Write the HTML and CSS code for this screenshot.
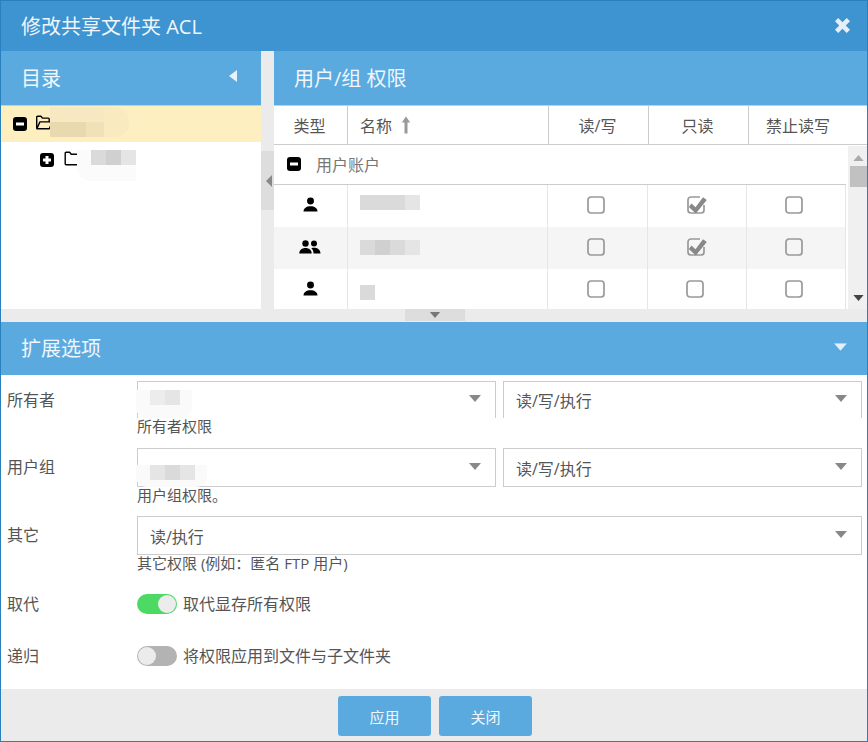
FILE: index.html
```html
<!DOCTYPE html>
<html lang="zh-CN">
<head>
    <meta charset="UTF-8">
    <meta name="viewport" content="width=device-width, initial-scale=1.0">
    <title>修改共享文件夹 ACL</title>
    <link rel="stylesheet" href="styles.css">
</head>
<body>
    <svg class="defs" aria-hidden="true">
        <symbol id="i-minus" viewBox="0 0 14 14"><rect width="14" height="14" rx="3" fill="#000"/><rect x="3" y="5.500" width="8" height="3" fill="#fff"/></symbol>
        <symbol id="i-plus" viewBox="0 0 14 14"><rect width="14" height="14" rx="3" fill="#000"/><path d="M5.500 3h3v2.500H11v3H8.500V11h-3V8.500H3v-3h2.500z" fill="#fff"/></symbol>
        <symbol id="i-folder-open" viewBox="0 0 17 15"><path d="M.7 13.500V2.200c0-.5.4-.9.9-.9h3.300l1.600 1.800h5.800c.5 0 .9.400.9.900v2.200M.9 13.700l3-6.800h12.400l-3 6.800z" fill="none" stroke="#000" stroke-width="1.400" stroke-linejoin="round"/></symbol>
        <symbol id="i-folder" viewBox="0 0 16 15"><path d="M.7 12.800V2.200c0-.5.4-.9.900-.9h3.500l1.600 1.900h7.800c.5 0 .9.400.9.900v8.700c0 .5-.4.900-.9.900H1.600c-.5 0-.9-.4-.9-.9z" fill="none" stroke="#000" stroke-width="1.400" stroke-linejoin="round"/></symbol>
        <symbol id="i-user" viewBox="0 0 16 16"><circle cx="8" cy="4.300" r="3.700"/><path d="M.5 15.500c0-3.600 3.200-5.700 7.500-5.700s7.500 2.100 7.500 5.700z"/></symbol>
        <symbol id="i-group" viewBox="0 0 22 14"><circle cx="6.500" cy="3.500" r="3.200"/><circle cx="15" cy="3.500" r="3"/><path d="M.3 13.500c0-3.400 2.600-5.500 6.200-5.500s6.200 2.100 6.200 5.500zM14.500 13.500c0-2.300-.8-4.200-2.200-5.200.8-.4 1.700-.5 2.700-.5 3.400 0 6.500 2 6.500 5.700z"/></symbol>
        <symbol id="i-box" viewBox="0 0 18 18"><rect x="1" y="1" width="16" height="16" rx="3" fill="none" stroke="#999" stroke-width="1.700"/></symbol>
        <symbol id="i-check" viewBox="0 0 21 18"><path d="M13 1H4a3 3 0 0 0-3 3v10a3 3 0 0 0 3 3h10a3 3 0 0 0 3-3V9" fill="none" stroke="#999" stroke-width="1.700"/><path d="M4.500 7.500l4 3.700 7.500-10 3.800 2.800-11 13.500-7-6.500z" fill="#888"/></symbol>
        <symbol id="i-caret" viewBox="0 0 12 7"><path d="M0 0h12L6 7z"/></symbol>
    </svg>

    <div class="dialog">
        <div class="title-bar">
            <span>修改共享文件夹 ACL</span>
            <svg class="close-icon" viewBox="0 0 14 14"><path d="M3 0l4 4 4-4 3 3-4 4 4 4-3 3-4-4-4 4-3-3 4-4-4-4z"/></svg>
        </div>

        <div class="panes">
            <div class="tree-pane">
                <div class="panel-head">
                    <span>目录</span>
                    <span class="arrow-left"></span>
                </div>
                <div class="tree-row selected">
                    <svg class="sq-icon"><use href="#i-minus"/></svg>
                    <svg class="folder-icon"><use href="#i-folder-open"/></svg>
                    <div class="smudge tree-smudge-1">
                        <i class="tan-1"></i><i class="tan-1"></i><i class="tan-1"></i>
                        <i class="tan-2 first"></i><i class="tan-2"></i><i class="tan-3"></i>
                    </div>
                </div>
                <div class="tree-row child">
                    <svg class="sq-icon"><use href="#i-plus"/></svg>
                    <svg class="folder-icon"><use href="#i-folder"/></svg>
                    <div class="smudge tree-smudge-2">
                        <i class="g2"></i><i class="g3"></i><i class="g1"></i>
                    </div>
                </div>
            </div>

            <div class="v-split"><div class="v-handle"><span class="split-arrow"></span></div></div>

            <div class="perm-pane">
                <div class="panel-head"><span>用户/组 权限</span></div>
                <div class="perm-cols">
                    <div>类型</div>
                    <div class="name-col">名称
                        <svg class="sort-icon" viewBox="0 0 10 18"><path d="M5 .5L.8 6.500h2.700V17.500h3V6.500h2.700z"/></svg>
                    </div>
                    <div>读/写</div>
                    <div>只读</div>
                    <div>禁止读写</div>
                </div>
                <div class="perm-body">
                    <div class="perm-list">
                        <div class="group-row">
                            <svg class="sq-icon"><use href="#i-minus"/></svg>
                            <span>用户账户</span>
                        </div>
                        <div class="perm-row">
                            <div><svg class="user-icon"><use href="#i-user"/></svg></div>
                            <div class="name-cell"><div class="smudge name-smudge"><i class="g2"></i><i class="g2"></i><i class="g2"></i><i class="g1"></i></div></div>
                            <div><svg class="box"><use href="#i-box"/></svg></div>
                            <div><svg class="box check"><use href="#i-check"/></svg></div>
                            <div><svg class="box"><use href="#i-box"/></svg></div>
                        </div>
                        <div class="perm-row striped">
                            <div><svg class="group-icon"><use href="#i-group"/></svg></div>
                            <div class="name-cell"><div class="smudge name-smudge mid"><i class="g2"></i><i class="g3"></i><i class="g2"></i><i class="g1"></i></div></div>
                            <div><svg class="box"><use href="#i-box"/></svg></div>
                            <div><svg class="box check"><use href="#i-check"/></svg></div>
                            <div><svg class="box"><use href="#i-box"/></svg></div>
                        </div>
                        <div class="perm-row">
                            <div><svg class="user-icon"><use href="#i-user"/></svg></div>
                            <div class="name-cell"><div class="smudge name-smudge low"><i class="g2"></i></div></div>
                            <div><svg class="box"><use href="#i-box"/></svg></div>
                            <div><svg class="box"><use href="#i-box"/></svg></div>
                            <div><svg class="box"><use href="#i-box"/></svg></div>
                        </div>
                    </div>
                    <div class="scrollbar">
                        <svg class="scroll-up" viewBox="0 0 12 7"><path d="M6 0l6 7H0z"/></svg>
                        <div class="scroll-thumb"></div>
                        <svg class="scroll-down" viewBox="0 0 12 7"><path d="M0 0h12L6 7z"/></svg>
                    </div>
                </div>
            </div>
        </div>

        <div class="h-split"><div class="h-handle"><svg viewBox="0 0 12 7"><use href="#i-caret"/></svg></div></div>

        <div class="panel-head ext-head">
            <span>扩展选项</span>
            <svg class="ext-caret" viewBox="0 0 12 7"><use href="#i-caret"/></svg>
        </div>

        <div class="form">
            <div class="form-row row-owner">
                <label>所有者</label>
                <div class="field">
                    <div class="select-pair">
                        <div class="select open-bottom">
                            <div class="smudge select-smudge"><i class="g0"></i><i class="g1"></i></div>
                            <svg class="select-caret" viewBox="0 0 12 7"><use href="#i-caret"/></svg>
                        </div>
                        <div class="select open-bottom">
                            <span>读/写/执行</span>
                            <svg class="select-caret" viewBox="0 0 12 7"><use href="#i-caret"/></svg>
                        </div>
                    </div>
                    <div class="hint">所有者权限</div>
                </div>
            </div>
            <div class="form-row row-group">
                <label>用户组</label>
                <div class="field">
                    <div class="select-pair">
                        <div class="select">
                            <div class="smudge select-smudge lower"><i class="g1"></i><i class="g2"></i><i class="g1"></i></div>
                            <svg class="select-caret" viewBox="0 0 12 7"><use href="#i-caret"/></svg>
                        </div>
                        <div class="select">
                            <span>读/写/执行</span>
                            <svg class="select-caret" viewBox="0 0 12 7"><use href="#i-caret"/></svg>
                        </div>
                    </div>
                    <div class="hint">用户组权限。</div>
                </div>
            </div>
            <div class="form-row row-other">
                <label>其它</label>
                <div class="field">
                    <div class="select">
                        <span>读/执行</span>
                        <svg class="select-caret" viewBox="0 0 12 7"><use href="#i-caret"/></svg>
                    </div>
                    <div class="hint">其它权限 (例如：匿名 FTP 用户)</div>
                </div>
            </div>
            <div class="form-row row-toggle">
                <label>取代</label>
                <div class="toggle-wrap"><span class="toggle on"><b></b></span><span>取代显存所有权限</span></div>
            </div>
            <div class="form-row row-toggle">
                <label>递归</label>
                <div class="toggle-wrap"><span class="toggle"><b></b></span><span>将权限应用到文件与子文件夹</span></div>
            </div>
        </div>

        <div class="footer">
            <button>应用</button>
            <button>关闭</button>
        </div>
    </div>
</body>
</html>
```

FILE: styles.css
```css
* {
    box-sizing: border-box;
}
html, body {
    margin: 0;
    height: 100%;
    overflow: hidden;
}
body {
    font-family: "Open Sans", "Noto Sans CJK SC", sans-serif;
    font-size: 16px;
    color: #555;
    background-color: #fff;
}
.defs {
    position: absolute;
    width: 0;
    height: 0;
}
.dialog {
    width: 868px;
    height: 742px;
    border: 1px solid #2a7fbd;
    display: flex;
    flex-direction: column;
}
.title-bar {
    height: 50px;
    flex: none;
    background-color: #3d94d0;
    color: #f0f6fb;
    font-size: 20px;
    display: flex;
    align-items: center;
    justify-content: space-between;
    padding: 0 17px 2px 20px;
}
.close-icon {
    width: 15px;
    height: 15px;
    fill: #e4f0f9;
}
.panes {
    height: 258px;
    flex: none;
    display: flex;
}
.panel-head {
    height: 55px;
    flex: none;
    background-color: #5aaadf;
    border-bottom: 1px solid #ccc;
    color: #f0f6fb;
    font-size: 20px;
    display: flex;
    align-items: center;
    justify-content: space-between;
    padding: 0 20px 2px 20px;
}
.tree-pane {
    width: 260px;
    flex: none;
    background-color: #fff;
}
.arrow-left {
    width: 0;
    height: 0;
    border-top: 6px solid transparent;
    border-bottom: 6px solid transparent;
    border-right: 8px solid #e8f2fa;
    margin-right: 4px;
    margin-top: -3px;
}
.tree-row {
    height: 36px;
    display: flex;
    align-items: center;
    position: relative;
    padding-left: 12px;
}
.tree-row.selected {
    background-color: #feefc0;
}
.tree-row.child {
    padding-left: 39px;
}
.sq-icon {
    width: 14px;
    height: 14px;
    flex: none;
}
.folder-icon {
    width: 17px;
    height: 15px;
    margin-left: 9px;
    margin-top: -3px;
    flex: none;
}
.child .folder-icon {
    margin-left: 10px;
}
.smudge {
    position: absolute;
    display: grid;
    grid-auto-rows: 15px;
}
.smudge i {
    display: block;
}
.tree-smudge-1 {
    left: 49px;
    top: 1px;
    grid-template-columns: repeat(3, 18px);
    padding-right: 25px;
    border-radius: 14px;
    background-color: #faeac0;
}
.tree-smudge-2 {
    left: 76px;
    top: 8px;
    grid-template-columns: repeat(3, 15px);
    padding-left: 14px;
    padding-bottom: 16px;
    border-radius: 0 0 0 14px;
    background-color: #fbfbfb;
}
.tan-1 { background-color: #f6e8c0; }
.tan-2 { background-color: #e8d9af; }
.tan-3 { background-color: #f0e1b7; }
.g0 { background-color: #ececec; }
.g1 { background-color: #e5e5e5; }
.g2 { background-color: #dadada; }
.g3 { background-color: #d0d0d0; }
.v-split {
    width: 13px;
    flex: none;
    background-color: #ebebeb;
}
.v-handle {
    height: 59px;
    margin-top: 100px;
    background-color: #ddd;
    display: flex;
    align-items: center;
    justify-content: center;
}
.split-arrow {
    width: 0;
    height: 0;
    border-top: 6px solid transparent;
    border-bottom: 6px solid transparent;
    border-right: 6px solid #888;
    margin-left: 3px;
}
.perm-pane {
    flex: 1;
    min-width: 0;
    display: flex;
    flex-direction: column;
    background-color: #fff;
}
.perm-cols {
    height: 39px;
    flex: none;
    display: grid;
    grid-template-columns: 74px 201px 100px 100px 1fr;
    border-bottom: 1px solid #ccc;
    color: #555;
    font-size: 16px;
}
.perm-cols > div {
    display: flex;
    align-items: center;
    justify-content: center;
    border-right: 1px solid #ccc;
    padding: 0 2px 0 0;
}
.perm-cols > div:last-child {
    border-right: none;
    padding-right: 20px;
}
.perm-cols .name-col {
    justify-content: flex-start;
    padding-left: 12px;
    gap: 9px;
}
.sort-icon {
    width: 10px;
    height: 18px;
    fill: #999;
}
.perm-body {
    flex: 1;
    min-height: 0;
    display: flex;
    overflow: hidden;
}
.perm-list {
    width: 572px;
    flex: none;
}
.group-row {
    height: 40px;
    display: flex;
    align-items: center;
    gap: 15px;
    padding: 0 0 2px 13px;
    border-bottom: 1px solid #ccc;
    color: #777;
    font-size: 16px;
    background-color: #fff;
}
.perm-row {
    height: 42px;
    display: grid;
    grid-template-columns: 74px 200px 100px 99px 99px;
}
.perm-row > div {
    display: flex;
    align-items: center;
    justify-content: center;
    border-right: 1px solid #e6e6e6;
}
.perm-row.striped {
    background-color: #f5f5f5;
}
.perm-row .name-cell {
    position: relative;
}
.name-smudge {
    left: 12px;
    top: 10px;
    grid-template-columns: repeat(4, 15px);
}
.name-smudge.mid {
    top: 13px;
}
.name-smudge.low {
    top: 16px;
}
.user-icon {
    width: 15px;
    height: 15px;
    margin: -3px 1px 0 0;
    fill: #000;
}
.group-icon {
    width: 22px;
    height: 14px;
    margin: -3px 1px 0 0;
    fill: #000;
}
.box {
    width: 18px;
    height: 18px;
    margin: -3px 4px 0 0;
}
.box.check {
    width: 21px;
    margin-right: 0;
}
.scrollbar {
    flex: 1;
    margin-left: 2px;
    margin-top: 1px;
    background-color: #f0f0f0;
    display: flex;
    flex-direction: column;
    align-items: center;
    padding-left: 2px;
}
.scroll-up,
.scroll-down {
    width: 11px;
    height: 6px;
    flex: none;
}
.scroll-up {
    fill: #aaa;
    margin-top: 9px;
}
.scroll-down {
    fill: #444;
    margin-top: auto;
    margin-bottom: 8px;
}
.scroll-thumb {
    width: 100%;
    height: 21px;
    margin-top: 5px;
    background-color: #c1c1c1;
}
.h-split {
    height: 13px;
    flex: none;
    background-color: #ebebeb;
}
.h-handle {
    width: 60px;
    height: 12px;
    margin-left: 404px;
    background-color: #ddd;
    display: flex;
    align-items: center;
    justify-content: center;
}
.h-handle svg {
    width: 12px;
    height: 6px;
    fill: #777;
}
.ext-head {
    height: 53px;
    border-bottom: none;
    padding-right: 20px;
    padding-bottom: 3px;
}
.ext-caret {
    width: 13px;
    height: 8px;
    fill: #e4f0f9;
}
.form {
    flex: 1;
    min-height: 0;
    padding: 6px 5px 0 6px;
    background-color: #fff;
}
.form-row {
    display: flex;
    align-items: flex-start;
}
.form-row label {
    width: 130px;
    flex: none;
    padding-top: 6px;
    font-size: 16px;
}
.field {
    flex: 1;
    min-width: 0;
}
.row-owner {
    height: 67px;
}
.row-group {
    height: 68px;
}
.row-other {
    height: 78px;
}
.select-pair {
    display: flex;
    gap: 7px;
}
.select {
    flex: 1;
    height: 39px;
    border: 1px solid #ccc;
    position: relative;
    display: flex;
    align-items: center;
    justify-content: space-between;
    padding: 0 14px 0 12px;
    color: #555;
    background-color: #fff;
}
.select.open-bottom {
    height: 37px;
    border-bottom: none;
}
.select-caret {
    width: 12px;
    height: 7px;
    fill: #888;
    margin-left: auto;
    margin-top: -3px;
}
.select-smudge {
    left: -2px;
    top: 8px;
    grid-template-columns: repeat(2, 15px);
    padding-left: 14px;
    padding-right: 12px;
    padding-bottom: 13px;
    border-radius: 0 0 10px 10px;
    background-color: #fafafa;
}
.select-smudge.lower {
    top: 16px;
    grid-template-columns: repeat(3, 15px);
    padding-bottom: 7px;
}
.hint {
    font-size: 15px;
    line-height: 18px;
    height: 18px;
    margin-top: -1px;
    color: #555;
    white-space: nowrap;
}
.row-toggle {
    height: 52px;
}
.row-toggle label {
    padding-top: 0;
    line-height: 20px;
    height: 20px;
}
.toggle-wrap {
    display: flex;
    align-items: center;
    gap: 6px;
    line-height: 20px;
    font-size: 16px;
}
.toggle {
    width: 40px;
    height: 20px;
    border-radius: 10px;
    background-color: #b3b3b3;
    display: flex;
    padding: 1px;
    flex: none;
}
.toggle b {
    display: block;
    width: 18px;
    height: 18px;
    border-radius: 50%;
    background-color: #ececec;
}
.toggle.on {
    background-color: #4cd964;
    justify-content: flex-end;
}
.footer {
    height: 52px;
    flex: none;
    background-color: #ebebeb;
    display: flex;
    justify-content: center;
    gap: 8px;
    padding: 7px 0 0 2px;
}
button {
    width: 93px;
    height: 40px;
    border: none;
    border-radius: 3px;
    background-color: #5aaadf;
    color: #f0f6fb;
    font-family: inherit;
    font-size: 15px;
    cursor: pointer;
}
```
